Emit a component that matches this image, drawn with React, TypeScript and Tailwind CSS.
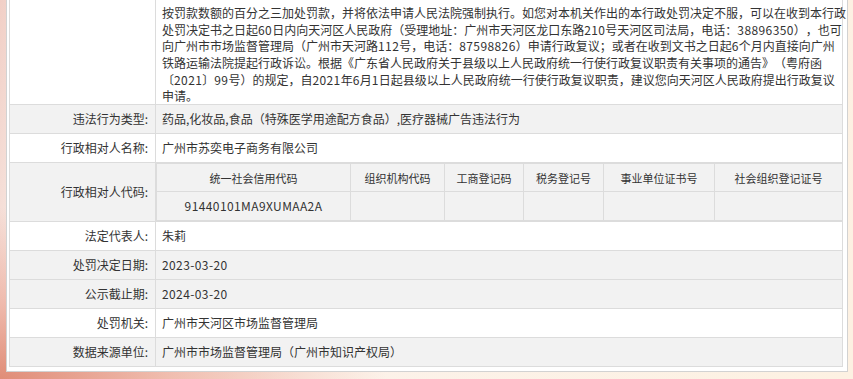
import React from 'react';

type Row = {
  label: string;
  value?: string;
  shaded?: boolean;
};

const NOTICE_LINES = [
  '按罚款数额的百分之三加处罚款，并将依法申请人民法院强制执行。如您对本机关作出的本行政处罚决定不服，可以在收到本行政',
  '处罚决定书之日起60日内向天河区人民政府（受理地址：广州市天河区龙口东路210号天河区司法局，电话：38896350），也可',
  '向广州市市场监督管理局（广州市天河路112号，电话：87598826）申请行政复议；或者在收到文书之日起6个月内直接向广州',
  '铁路运输法院提起行政诉讼。根据《广东省人民政府关于县级以上人民政府统一行使行政复议职责有关事项的通告》（粤府函',
  '〔2021〕99号）的规定，自2021年6月1日起县级以上人民政府统一行使行政复议职责，建议您向天河区人民政府提出行政复议',
  '申请。',
];

const TOP_ROWS: Row[] = [
  { label: '违法行为类型:', value: '药品,化妆品,食品（特殊医学用途配方食品）,医疗器械广告违法行为', shaded: true },
  { label: '行政相对人名称:', value: '广州市苏奕电子商务有限公司' },
];

const BOTTOM_ROWS: Row[] = [
  { label: '法定代表人:', value: '朱莉' },
  { label: '处罚决定日期:', value: '2023-03-20', shaded: true },
  { label: '公示截止期:', value: '2024-03-20', shaded: true },
  { label: '处罚机关:', value: '广州市天河区市场监督管理局' },
  { label: '数据来源单位:', value: '广州市市场监督管理局（广州市知识产权局）', shaded: true },
];

const CODE_COLUMNS = [
  { title: '统一社会信用代码', value: '91440101MA9XUMAA2A', width: 'w-[194px]' },
  { title: '组织机构代码', value: '', width: 'w-[94px]' },
  { title: '工商登记码', value: '', width: 'w-[79px]' },
  { title: '税务登记号', value: '', width: 'w-[80px]' },
  { title: '事业单位证书号', value: '', width: 'w-[111px]' },
  { title: '社会组织登记证号', value: '', width: 'flex-1' },
];

// latin/digit runs get a little extra spacing, CJK stays on the 12px grid
function Spaced({ text }: { text: string }) {
  const parts = text.split(/([0-9A-Za-z-]+)/);
  return (
    <>
      {parts.map((p, i) =>
        i % 2 === 1 ? <span key={i} className="tracking-[0.4px]">{p}</span> : <React.Fragment key={i}>{p}</React.Fragment>
      )}
    </>
  );
}

function InfoRow({ label, value, shaded }: Row) {
  return (
    <div className={`flex border-t border-[#dcdcdc] ${shaded ? 'bg-[#f2f2f2]' : 'bg-white'}`}>
      <div className="w-[146px] shrink-0 border-r border-[#dcdcdc] pr-[7px] text-right leading-[28px]">{label}</div>
      <div className="flex-1 pl-[6px] leading-[28px]">
        <Spaced text={value ?? ''} />
      </div>
    </div>
  );
}

export default function App() {
  return (
    <div
      className="h-[379px] w-[853px] overflow-hidden bg-[radial-gradient(ellipse_at_0%_100%,#e08d78_0%,rgba(232,150,130,0.55)_14%,rgba(245,215,205,0)_32%),linear-gradient(100deg,#f1cfc6_0%,#f7e6e0_6%,#fcf2ea_40%,#fdf1e2_100%)] text-[12px] text-[#333] [text-spacing-trim:space-all]"
      style={{ fontFamily: '"Noto Sans CJK SC", "Noto Sans", sans-serif' }}
    >
      <div className="ml-[6px] w-[842px] border border-t-0 border-[#d2d2d2] bg-white pb-[4px] pl-[2px] pr-[4px]">
        <div className="border border-t-0 border-[#dcdcdc]">
          {/* penalty notice text */}
          <div className="flex bg-white">
            <div className="w-[146px] shrink-0 border-r border-[#dcdcdc]"></div>
            <div className="flex-1 pb-0 pl-[6px] pt-[4px] leading-[16.67px]">
              {NOTICE_LINES.map(line => (
                <div key={line} className="relative top-[1px] whitespace-nowrap">
                  <Spaced text={line} />
                </div>
              ))}
            </div>
          </div>

          {TOP_ROWS.map(r => <InfoRow key={r.label} {...r} />)}

          {/* party codes */}
          <div className="flex border-t border-[#dcdcdc] bg-[#f2f2f2]">
            <div className="flex w-[146px] shrink-0 items-center justify-end border-r border-[#dcdcdc] pr-[7px]">
              行政相对人代码:
            </div>
            <div className="flex flex-1 border border-r-0 border-[#dcdcdc] text-center">
              {CODE_COLUMNS.map((c, i) => (
                <div
                  key={c.title}
                  className={`${c.width} ${i < CODE_COLUMNS.length - 1 ? 'border-r' : ''} border-[#dcdcdc] flex flex-col`}
                >
                  <div className="h-[28px] border-b border-[#dcdcdc] text-[11px] leading-[28px]">{c.title}</div>
                  <div className="h-[28px] leading-[28px] tracking-[0.4px]">{c.value}</div>
                </div>
              ))}
            </div>
          </div>

          {BOTTOM_ROWS.map(r => <InfoRow key={r.label} {...r} />)}
        </div>
      </div>
    </div>
  );
}
